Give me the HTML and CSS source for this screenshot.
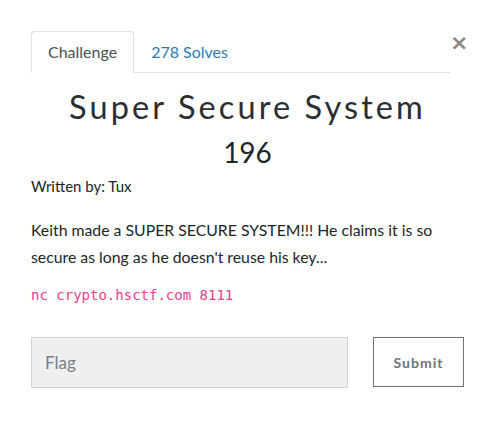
FILE: index.html
```html
<!DOCTYPE html>
<html>
<head>
<meta charset="utf-8">
<link rel="stylesheet" href="styles.css">
</head>
<body>
<div class="modal">
  <div class="tabrow">
    <ul class="tabs">
      <li class="tab active">Challenge</li>
      <li class="tab">278 Solves</li>
    </ul>
    <button class="close" aria-label="Close">&times;</button>
  </div>
  <h2 class="title">Super Secure System</h2>
  <h3 class="value">196</h3>
  <p class="author">Written by: Tux</p>
  <p class="desc">Keith made a SUPER SECURE SYSTEM!!! He claims it is so secure as long as he doesn't reuse his key...</p>
  <p class="cmd"><code>nc crypto.hsctf.com 8111</code></p>
  <form class="submit-row">
    <input class="flag" type="text" placeholder="Flag">
    <button class="submit" type="button">Submit</button>
  </form>
</div>
</body>
</html>
```

FILE: styles.css
```css
html, body {
  margin: 0;
  padding: 0;
  background: #fff;
}
body {
  font-family: Lato, "Liberation Sans", sans-serif;
  color: #212529;
}
.modal {
  padding: 31px 31px 0 31px;
}
.tabrow {
  display: flex;
  align-items: flex-start;
}
.tabs {
  flex: 1;
  display: flex;
  list-style: none;
  margin: 0;
  padding: 0;
  border-bottom: 1px solid #dee2e6;
}
.tab {
  font-size: 16px;
  line-height: 22px;
  padding: 9px 16px;
  margin-bottom: -1px;
  border: 1px solid transparent;
  border-radius: 4px 4px 0 0;
  color: #2c7ab8;
}
.tab.active {
  color: #495057;
  border-color: #dee2e6 #dee2e6 #fff;
  background: #fff;
}
.close {
  width: 14px;
  padding: 0;
  margin: 4px 0 0 0;
  border: 0;
  background: none;
  font-family: "DejaVu Sans", sans-serif;
  font-weight: bold;
  font-size: 22px;
  line-height: 16px;
  color: #888;
  text-align: right;
}
.title {
  margin: 14px 0 0 0;
  text-align: center;
  font-weight: 400;
  font-size: 32.5px;
  line-height: 40px;
  letter-spacing: 3.1px;
  color: #2a2e33;
}
.value {
  margin: 7px 0 0 0;
  text-align: center;
  font-weight: 400;
  font-size: 28px;
  line-height: 36px;
}
.author {
  margin: 5px 0 0 0;
  font-size: 15px;
  line-height: 22px;
}
.desc {
  margin: 19px 0 0 0;
  font-size: 15.8px;
  line-height: 27px;
}
.cmd {
  margin: 14px 0 0 0;
  line-height: 20px;
}
.cmd code {
  font-family: "DejaVu Sans Mono", monospace;
  font-size: 14px;
  color: #e83e8c;
}
.submit-row {
  display: flex;
  gap: 25px;
  margin-top: 32px;
}
.flag {
  width: 317px;
  height: 51px;
  box-sizing: border-box;
  border: 1px solid #ced4da;
  background: #efefef;
  padding: 0 13px;
  font-family: Lato, sans-serif;
  font-size: 17px;
  color: #495057;
}
.flag::placeholder {
  color: #7a8086;
}
.submit {
  width: 91px;
  height: 50px;
  box-sizing: border-box;
  border: 1px solid #6c757d;
  background: #fff;
  font-family: Lato, sans-serif;
  font-weight: bold;
  font-size: 14px;
  letter-spacing: 1px;
  color: #6c757d;
}
```
